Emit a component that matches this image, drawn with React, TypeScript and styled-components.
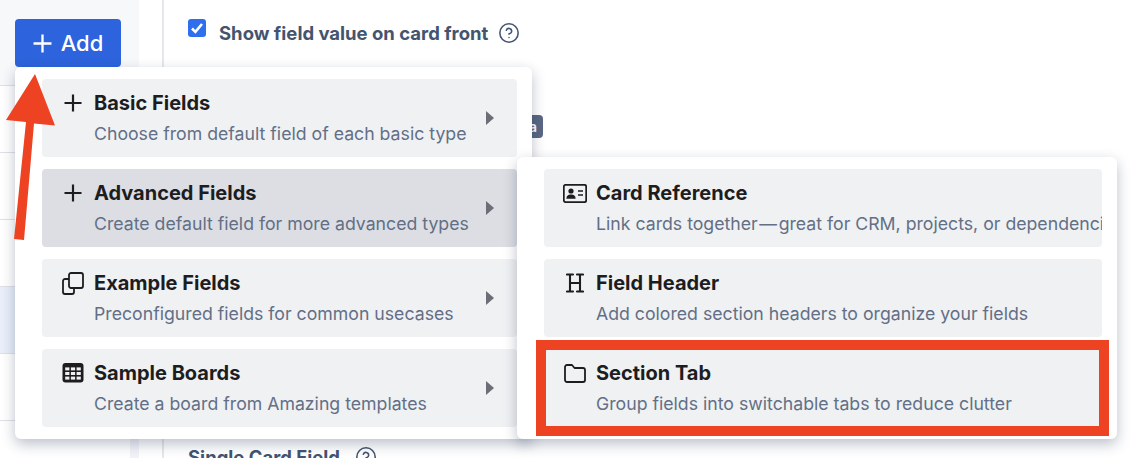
import React from "react";
import styled, { createGlobalStyle } from "styled-components";
import { CircleHelp } from "lucide-react";

const Global = createGlobalStyle`
  html, body {
    margin: 0;
    background: #fff;
    font-family: Inter, "Liberation Sans", sans-serif;
    -webkit-font-smoothing: antialiased;
  }
`;

const Page = styled.div`
  position: relative;
  display: flex;
  width: 1138px;
  height: 458px;
  overflow: hidden;
`;

const Sidebar = styled.aside`
  width: 130px;
  flex: none;
  display: flex;
  flex-direction: column;
`;

const SideHeader = styled.div`
  height: 86px;
  flex: none;
  box-sizing: border-box;
  padding: 19px 0 0 15px;
  background: #f7f8fa;
  margin-right: -9px;
  border-bottom: 1px solid #dfe1e6;
`;

const AddButton = styled.button`
  width: 106px;
  height: 48px;
  display: flex;
  align-items: center;
  justify-content: center;
  gap: 9px;
  border: 0;
  padding: 0;
  border-radius: 4px;
  background: #2d63dc;
  color: #fff;
  font: 500 22px Inter, sans-serif;
`;

const SideRow = styled.div<{ $active?: boolean }>`
  height: 67px;
  flex: none;
  box-sizing: border-box;
  background: ${(p) => (p.$active ? "#e9eefa" : "#fff")};
  border-bottom: 1px solid #dfe1e6;
`;

const Track = styled.div`
  width: 9px;
  flex: none;
  margin-top: 86px;
  background: #f1f3f8;
`;

const Gutter = styled.div`
  width: 25px;
  flex: none;
  box-sizing: border-box;
  border-right: 2px solid #e6e7eb;
`;

const Main = styled.main`
  flex: 1;
  display: flex;
  flex-direction: column;
  padding: 22px 0 0 24px;
  color: #44546f;
`;

const CheckRow = styled.div`
  height: 24px;
  display: flex;
  align-items: center;
  font-size: 18.5px;
  font-weight: 700;
`;

const CheckBox = styled.span`
  width: 18px;
  height: 18px;
  margin: -10px 13px 0 0;
  border-radius: 3px;
  background: #2f6fee;
  display: flex;
  align-items: center;
  justify-content: center;
`;

const Help = styled(CircleHelp)<{ $gap: number }>`
  margin-left: ${(p) => p.$gap}px;
  flex: none;
`;

const Tag = styled.span`
  margin: 71px 0 0 312px;
  width: 43px;
  height: 23px;
  box-sizing: border-box;
  padding-right: 6px;
  text-align: right;
  border-radius: 4px;
  background: #5a6885;
  color: #fff;
  font-size: 14px;
  font-weight: 600;
  line-height: 23px;
`;

const Rule = styled.hr<{ $top: number }>`
  margin: ${(p) => p.$top}px 0 0;
  height: 2px;
  border: 0;
  background: #e0e2e8;
`;

const FieldLabel = styled.div`
  margin-top: 45px;
  display: flex;
  align-items: center;
  font-size: 18.5px;
  font-weight: 700;
`;

const Menu = styled.div<{ $left: number; $top: number; $width: number; $pad: number }>`
  position: absolute;
  left: ${(p) => p.$left}px;
  top: ${(p) => p.$top}px;
  width: ${(p) => p.$width}px;
  box-sizing: border-box;
  padding: 12px 15px 12px ${(p) => p.$pad}px;
  display: flex;
  flex-direction: column;
  gap: 12px;
  background: #fff;
  border-radius: 6px;
  box-shadow: 0 5px 14px rgba(9, 30, 66, 0.28);
`;

const Item = styled.div<{ $active?: boolean }>`
  position: relative;
  height: 78px;
  display: grid;
  grid-template-columns: 52px 1fr;
  grid-template-rows: 48px 30px;
  border-radius: 4px;
  overflow: hidden;
  background: ${(p) => (p.$active ? "#dcdee3" : "#f0f1f3")};
`;

const IconSlot = styled.div`
  display: flex;
  align-items: center;
  justify-content: center;
  padding-left: 10px;
  color: #1d1d20;
  grid-row: 1;
  svg {
    display: block;
  }
`;

const Title = styled.div`
  align-self: center;
  font-size: 20px;
  font-weight: 700;
  color: #1d1d20;
  white-space: nowrap;
`;

const Desc = styled.div`
  grid-column: 2;
  font-size: 17.7px;
  line-height: 24px;
  margin-top: -5px;
  color: #626f86;
  white-space: nowrap;
`;

const Caret = styled.span`
  position: absolute;
  right: 23px;
  top: 32px;
  width: 0;
  height: 0;
  border-left: 8px solid #6b6e76;
  border-top: 7px solid transparent;
  border-bottom: 7px solid transparent;
`;

const Highlight = styled.div`
  position: absolute;
  left: 536px;
  top: 340px;
  width: 573px;
  height: 96px;
  box-sizing: border-box;
  border: 10px solid #ee4323;
`;

const ArrowMark = styled.svg`
  position: absolute;
  left: 0;
  top: 70px;
`;

const PlusIcon = ({ size = 18 }: { size?: number }) => (
  <svg width={size} height={size} viewBox="0 0 18 18" fill="none" stroke="currentColor" strokeWidth="2.2">
    <path d="M9 0.500v17M0.500 9h17" />
  </svg>
);

const CopyIcon = () => (
  <svg width="22" height="23" viewBox="0 0 22 23" fill="none" stroke="currentColor" strokeWidth="1.8">
    <rect x="7" y="1" width="14" height="15" rx="2" />
    <path d="M7 7H3a2 2 0 0 0-2 2v11a2 2 0 0 0 2 2h7a2 2 0 0 0 2-2v-4" />
  </svg>
);

const TableIcon = () => (
  <svg width="22" height="20" viewBox="0 0 22 20">
    <rect x="0.5" width="21" height="19.500" rx="3" fill="currentColor" />
    <g fill="#f0f1f3">
      <rect x="3.200" y="4.400" width="4.200" height="3" />
      <rect x="8.900" y="4.400" width="4.200" height="3" />
      <rect x="14.600" y="4.400" width="4.200" height="3" />
      <rect x="3.200" y="9" width="4.200" height="3" />
      <rect x="8.900" y="9" width="4.200" height="3" />
      <rect x="14.600" y="9" width="4.200" height="3" />
      <rect x="3.200" y="13.600" width="4.200" height="3" />
      <rect x="8.900" y="13.600" width="4.200" height="3" />
      <rect x="14.600" y="13.600" width="4.200" height="3" />
    </g>
  </svg>
);

const CardIcon = () => (
  <svg width="24" height="19" viewBox="0 0 24 19" fill="none" stroke="currentColor">
    <rect x="0.8" y="0.8" width="22.4" height="17.4" rx="2" strokeWidth="1.8" />
    <circle cx="8" cy="7" r="2.6" fill="currentColor" stroke="none" />
    <path d="M3.400 14.800c0-3.200 2-4.300 4.600-4.300s4.600 1.100 4.600 4.300z" fill="currentColor" stroke="none" />
    <path d="M15 7h5M15 11h5" strokeWidth="1.7" />
  </svg>
);

const HeaderIcon = () => (
  <svg width="18" height="20" viewBox="0 0 18 20" fill="none" stroke="currentColor" strokeWidth="2.1" strokeLinecap="round">
    <path d="M1 1.500h6M11 1.500h6M1 18.500h6M11 18.500h6M4 1.500v17M14 1.500v17M4 10h10" />
  </svg>
);

const FolderIcon = () => (
  <svg width="22" height="19" viewBox="0 0 22 19" fill="none" stroke="currentColor" strokeWidth="1.8" strokeLinejoin="round">
    <path d="M3 1h5l2.500 3H19a2 2 0 0 1 2 2v10a2 2 0 0 1-2 2H3a2 2 0 0 1-2-2V3a2 2 0 0 1 2-2z" />
  </svg>
);

const mainItems = [
  { icon: <PlusIcon />, title: "Basic Fields", desc: "Choose from default field of each basic type" },
  { icon: <PlusIcon />, title: "Advanced Fields", desc: "Create default field for more advanced types", active: true },
  { icon: <CopyIcon />, title: "Example Fields", desc: "Preconfigured fields for common usecases" },
  { icon: <TableIcon />, title: "Sample Boards", desc: "Create a board from Amazing templates" },
];

const subItems = [
  { icon: <CardIcon />, title: "Card Reference", desc: "Link cards together\u200a—\u200agreat for CRM, projects, or dependencies" },
  { icon: <HeaderIcon />, title: "Field Header", desc: "Add colored section headers to organize your fields" },
  { icon: <FolderIcon />, title: "Section Tab", desc: "Group fields into switchable tabs to reduce clutter" },
];

export default function App() {
  return (
    <Page>
      <Global />
      <Sidebar>
        <SideHeader>
          <AddButton>
            <PlusIcon size={19} />
            Add
          </AddButton>
        </SideHeader>
        <SideRow />
        <SideRow />
        <SideRow />
        <SideRow $active />
        <SideRow />
      </Sidebar>
      <Track />
      <Gutter />
      <Main>
        <CheckRow>
          <CheckBox>
            <svg width="14" height="14" viewBox="0 0 14 14" fill="none" stroke="#fff" strokeWidth="2.6">
              <path d="M2 7.500l3.400 3.400L12 3" />
            </svg>
          </CheckBox>
          Show field value on card front
          <Help size={22} strokeWidth={1.7} $gap={10} />
        </CheckRow>
        <Tag>Beta</Tag>
        <Rule $top={104} />
        <Rule $top={49} />
        <Rule $top={61} />
        <Rule $top={49} />
        <FieldLabel>
          Single Card Field
          <Help size={22} strokeWidth={1.7} $gap={15} />
        </FieldLabel>
      </Main>
      <Menu $left={15} $top={67} $width={517} $pad={27}>
        {mainItems.map((item) => (
          <Item key={item.title} $active={item.active}>
            <IconSlot>{item.icon}</IconSlot>
            <Title>{item.title}</Title>
            <Desc>{item.desc}</Desc>
            <Caret />
          </Item>
        ))}
      </Menu>
      <Menu $left={517} $top={157} $width={600} $pad={27}>
        {subItems.map((item) => (
          <Item key={item.title}>
            <IconSlot>{item.icon}</IconSlot>
            <Title>{item.title}</Title>
            <Desc>{item.desc}</Desc>
          </Item>
        ))}
      </Menu>
      <Highlight />
      <ArrowMark width="60" height="175" viewBox="0 70 60 175">
        <path d="M35 74L55 125.500L34 123.500L24 240L14 239L26 122L6 120Z" fill="#ee4323" />
      </ArrowMark>
    </Page>
  );
}
